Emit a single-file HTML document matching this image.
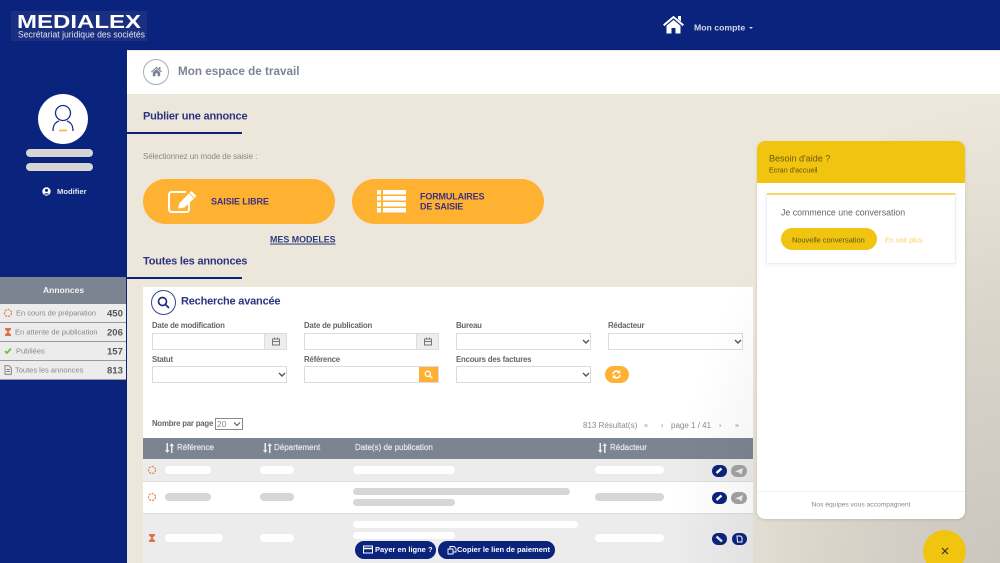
<!DOCTYPE html>
<html lang="fr"><head><meta charset="utf-8"><title>Medialex</title>
<style>
*{box-sizing:border-box}
html,body{margin:0;padding:0;width:1000px;height:563px;overflow:hidden;background:#ede7db;font-family:"Liberation Sans",sans-serif}
#page{position:relative;width:1000px;height:563px;overflow:hidden;background:#ede7db}
.a{position:absolute}
.t{position:absolute;white-space:nowrap;line-height:1;transform:translateY(-50%)}
.h2{font-size:11px;font-weight:700;color:#2a3380;letter-spacing:-.2px}
.lb{font-size:7.8px;font-weight:700;color:#666;letter-spacing:-.2px}
.p{position:absolute;border-radius:5px}
.w{background:#fff}.g{background:#d6d6d6}
input,select{position:absolute;margin:0;padding:0;background:#fff;border:1px solid #dcdcdc;border-radius:0;appearance:none;-webkit-appearance:none;height:17px}
.ad{position:absolute;height:17px;width:22px;background:#eee;border:1px solid #dcdcdc;border-left:0}
.row{position:absolute;left:0;width:126px;height:18px;background:#ececec;font-size:7.500px;color:#888}
.row b{position:absolute;left:107px;top:10px;transform:translateY(-50%);font-size:9.500px;color:#555;line-height:1}
.row span{position:absolute;top:50%;transform:translateY(-50%);line-height:1;white-space:nowrap}
.row svg{position:absolute;left:3px;top:4px}
.th{position:absolute;top:448px;transform:translateY(-50%);font-size:8px;color:#e6e8ee;-webkit-text-stroke:.2px #e6e8ee;line-height:1;white-space:nowrap}
.pay{position:absolute;top:541px;height:18px;border-radius:9px;background:#0a237d;color:#fff;font-size:7.500px;font-weight:700;line-height:18px;white-space:nowrap}
</style></head><body><div id="page">

<!-- header + sidebar -->
<div class="a" style="left:0;top:0;width:1000px;height:50px;background:#0a237d"></div>
<div class="a" style="left:0;top:50px;width:127px;height:513px;background:#0a237d"></div>
<div class="a" style="left:11px;top:11px;width:136px;height:30px;background:#1a2f80"></div>
<svg class="a" style="left:11px;top:11px" width="136" height="30">
<text x="6" y="17" font-family="Liberation Sans" font-weight="700" font-size="18" fill="#fff" textLength="124" lengthAdjust="spacingAndGlyphs">MEDIALEX</text>
<text x="7" y="26.500" font-family="Liberation Sans" font-size="9" fill="#dfe3f0" textLength="127" lengthAdjust="spacingAndGlyphs">Secrétariat juridique des sociétés</text>
</svg>
<svg class="a" style="left:663px;top:15px" width="21" height="19" viewBox="0 0 21 19"><path d="M.7 10.300 10.500 2l9.800 8.300" fill="none" stroke="#fff" stroke-width="2"/><path d="M15 1h3v5.500l-3-2.500zM3.500 10.800 10.500 4.900l7 5.900V18.500h-5v-5.500h-4v5.500h-5z" fill="#fff"/></svg>
<div class="t" style="left:694px;top:28px;font-size:8.700px;font-weight:700;color:#d5d9ea">Mon compte</div>
<div class="a" style="left:749px;top:27px;border:2.500px solid transparent;border-top:2.500px solid #d5d9ea;border-bottom:0"></div>

<!-- top band -->
<div class="a" style="left:127px;top:51px;width:873px;height:43px;background:#fff"></div>
<div class="a" style="left:143px;top:59px;width:26px;height:26px;border-radius:50%;border:1px solid #a8acb4;background:#fff"></div>
<svg class="a" style="left:151px;top:66px" width="11" height="11" viewBox="0 0 21 19"><path d="M.7 10.300 10.500 2l9.800 8.300" fill="none" stroke="#7d8491" stroke-width="2"/><path d="M15 1h3v5.500l-3-2.500zM3.500 10.800 10.500 4.900l7 5.900V18.500h-5v-5.500h-4v5.500h-5z" fill="#7d8491"/></svg>
<div class="t" style="left:178px;top:72px;font-size:11.700px;font-weight:700;color:#7d8491">Mon espace de travail</div>

<!-- user -->
<div class="a" style="left:38px;top:94px;width:50px;height:50px;border-radius:50%;background:#fff"></div>
<svg class="a" style="left:50px;top:104px" width="26" height="28" viewBox="0 0 26 28" fill="none" stroke="#1c2f85" stroke-width="1.300"><circle cx="13" cy="9" r="7.500"/><path d="M3 27c0-7 3-9 6-10M23 27c0-7-3-9-6-10"/><path d="M9 26.500h8" stroke="#ffb131" stroke-width="1.600"/></svg>
<div class="p" style="left:26px;top:149px;width:67px;height:8px;background:#d6d6d6;border-radius:4px"></div>
<div class="p" style="left:26px;top:163px;width:67px;height:8px;background:#d6d6d6;border-radius:4px"></div>
<svg class="a" style="left:42px;top:187px" width="9" height="9" viewBox="0 0 9 9"><circle cx="4.500" cy="4.500" r="4.200" fill="#fff"/><circle cx="4.500" cy="3.400" r="1.500" fill="#0a237d"/><path d="M1.800 7.500c.6-1.700 4.800-1.700 5.400 0" fill="#0a237d"/></svg>
<div class="t" style="left:57px;top:191.500px;font-size:7.600px;font-weight:700;color:#e6e8f2">Modifier</div>

<!-- annonces -->
<div class="a" style="left:0;top:277px;width:126px;height:27px;background:#7d8491"></div>
<div class="t" style="left:43px;top:290px;font-size:8.500px;font-weight:700;color:#f2f2f2">Annonces</div>
<div class="a" style="left:0;top:304px;width:126px;height:76px;background:#999"></div>
<div class="row" style="top:304px"><svg width="10" height="10"><circle cx="5" cy="5" r="3.500" fill="none" stroke="#e28050" stroke-width="1.300" stroke-dasharray="2 1.200"/></svg><span style="left:16px">En cours de préparation</span><b>450</b></div>
<div class="row" style="top:323px"><svg width="10" height="10" viewBox="0 0 10 10"><path d="M2 1h6v1.500L5.500 5 8 7.500V9H2V7.500L4.500 5 2 2.500z" fill="#d9744a"/></svg><span style="left:15px">En attente de publication</span><b>206</b></div>
<div class="row" style="top:342px"><svg width="10" height="10" viewBox="0 0 10 10"><path d="M2 5l2 2 4-4.500" fill="none" stroke="#62c23c" stroke-width="1.700"/></svg><span style="left:16px">Publiées</span><b>157</b></div>
<div class="row" style="top:361px"><svg width="10" height="10" viewBox="0 0 10 10"><path d="M2 .7h4L8.300 3v6.300H2zM3.500 4.500h3.300M3.500 6.500h3.300" fill="none" stroke="#777" stroke-width=".9"/></svg><span style="left:15px">Toutes les annonces</span><b>813</b></div>

<!-- main -->
<div class="t h2" style="left:143px;top:117px">Publier une annonce</div>
<div class="a" style="left:127px;top:132px;width:115px;height:2px;background:#0a237d"></div>
<div class="t" style="left:143px;top:156.500px;font-size:8px;letter-spacing:-.1px;color:#8b8784">Sélectionnez un mode de saisie :</div>

<div class="a" style="left:143px;top:179px;width:192px;height:45px;border-radius:22.500px;background:#ffb131"></div>
<svg class="a" style="left:167px;top:189px" width="32" height="26" viewBox="0 0 32 26" fill="none"><path d="M19 3H4.500A2.500 2.500 0 0 0 2 5.500v15A2.500 2.500 0 0 0 4.500 23h15a2.500 2.500 0 0 0 2.500-2.500V14" stroke="#fff" stroke-width="2"/><path d="M11 19.500 12.500 14 24.500 2l5 5L17.500 18.500z" fill="#fff"/><path d="M22.500 4.500l4.500 4.500" stroke="#ffb131" stroke-width=".8"/></svg>
<div class="t" style="left:211px;top:201.500px;font-size:9px;letter-spacing:-.1px;font-weight:700;color:#3d3180">SAISIE LIBRE</div>
<div class="a" style="left:352px;top:179px;width:192px;height:45px;border-radius:22.500px;background:#ffb131"></div>
<svg class="a" style="left:376px;top:189px" width="30" height="25" fill="#fff"><path d="M1 1h4v4.500H1zM7 1h23v4.500H7zM1 7h4v4.500H1zM7 7h23v4.500H7zM1 13h4v4.500H1zM7 13h23v4.500H7zM1 19h4v4.500H1zM7 19h23v4.500H7z"/></svg>
<div class="t" style="left:420px;top:197px;font-size:9px;letter-spacing:-.15px;font-weight:700;color:#3d3180">FORMULAIRES</div>
<div class="t" style="left:420px;top:207px;font-size:9px;letter-spacing:-.15px;font-weight:700;color:#3d3180">DE SAISIE</div>
<div class="t" style="left:270px;top:240px;font-size:8.900px;font-weight:700;color:#2f3a80;text-decoration:underline">MES MODELES</div>

<div class="t h2" style="left:143px;top:262px">Toutes les annonces</div>
<div class="a" style="left:127px;top:277px;width:115px;height:2px;background:#0a237d"></div>

<!-- card -->
<div class="a" style="left:143px;top:287px;width:610px;height:276px;background:#fff"></div>
<div class="a" style="left:151px;top:290px;width:25px;height:25px;border-radius:50%;border:1px solid #3a4590"></div>
<svg class="a" style="left:157px;top:296px" width="13" height="13" viewBox="0 0 13 13" fill="none" stroke="#1f2d80" stroke-width="1.700"><circle cx="5.500" cy="5.500" r="4"/><path d="M8.500 8.500 12 12"/></svg>
<div class="t h2" style="left:181px;top:302px">Recherche avancée</div>

<div class="t lb" style="left:152px;top:326px">Date de modification</div>
<div class="t lb" style="left:304px;top:326px">Date de publication</div>
<div class="t lb" style="left:456px;top:326px">Bureau</div>
<div class="t lb" style="left:608px;top:326px">Rédacteur</div>
<input style="left:152px;top:333px;width:113px"><div class="ad" style="left:265px;top:333px"></div>
<input style="left:304px;top:333px;width:113px"><div class="ad" style="left:417px;top:333px"></div>
<svg class="a" style="left:271px;top:337px" width="10" height="9" fill="none" stroke="#777"><path d="M1.500 2h7v6h-7zM1.500 4.500h7M3.500 .5v2M6.500 .5v2"/></svg>
<svg class="a" style="left:423px;top:337px" width="10" height="9" fill="none" stroke="#777"><path d="M1.500 2h7v6h-7zM1.500 4.500h7M3.500 .5v2M6.500 .5v2"/></svg>
<select style="left:456px;top:333px;width:135px"></select>
<select style="left:608px;top:333px;width:135px"></select>

<div class="t lb" style="left:152px;top:359.500px">Statut</div>
<div class="t lb" style="left:304px;top:359.500px">Référence</div>
<div class="t lb" style="left:456px;top:359.500px">Encours des factures</div>
<select style="left:152px;top:366px;width:135px"></select>
<input style="left:304px;top:366px;width:135px">
<div class="a" style="left:419px;top:367px;width:19px;height:15px;background:#ffb131"></div>
<svg class="a" style="left:424px;top:370px" width="9" height="9" viewBox="0 0 13 13" fill="none" stroke="#fff" stroke-width="2"><circle cx="5.500" cy="5.500" r="3.800"/><path d="M8.500 8.500 12 12"/></svg>
<select style="left:456px;top:366px;width:135px"></select>
<div class="a" style="left:605px;top:366px;width:24px;height:17px;border-radius:9px;background:#ffb131"></div>
<svg class="a" style="left:612px;top:370px" width="9" height="9" viewBox="0 0 9 9" fill="none" stroke="#fff" stroke-width="1.500"><path d="M1 4a3.500 3.500 0 0 1 6-1.800M8 5a3.500 3.500 0 0 1-6 1.800"/><path d="M7.800 .5v2.500H5.300M1.200 8.500V6h2.500" stroke-width="1"/></svg>
<svg class="a" style="left:582px;top:339px" width="8" height="6" fill="none" stroke="#555" stroke-width="1.400"><path d="M1 1l3 3 3-3"/></svg>
<svg class="a" style="left:734px;top:339px" width="8" height="6" fill="none" stroke="#555" stroke-width="1.400"><path d="M1 1l3 3 3-3"/></svg>
<svg class="a" style="left:278px;top:372px" width="8" height="6" fill="none" stroke="#555" stroke-width="1.400"><path d="M1 1l3 3 3-3"/></svg>
<svg class="a" style="left:582px;top:372px" width="8" height="6" fill="none" stroke="#555" stroke-width="1.400"><path d="M1 1l3 3 3-3"/></svg>

<div class="t lb" style="left:152px;top:424px">Nombre par page</div>
<div class="a" style="left:215px;top:418px;width:28px;height:12px;border:1px solid #888;font-size:8.500px;line-height:10px;color:#888;padding-left:1px">20</div>
<svg class="a" style="left:233px;top:422px" width="8" height="5" fill="none" stroke="#555" stroke-width="1.100"><path d="M1 .5l3 3 3-3"/></svg>
<div class="t" style="left:583px;top:425.500px;font-size:8px;color:#8a8a8a">813 Résultat(s)</div>
<div class="t" style="left:644px;top:425.500px;font-size:7px;color:#8a8a8a">«</div>
<div class="t" style="left:661px;top:425.500px;font-size:7px;color:#8a8a8a">‹</div>
<div class="t" style="left:671px;top:425.500px;font-size:8px;color:#8a8a8a">page 1 / 41</div>
<div class="t" style="left:719px;top:425.500px;font-size:7px;color:#8a8a8a">›</div>
<div class="t" style="left:735px;top:425.500px;font-size:7px;color:#8a8a8a">»</div>

<!-- table -->
<div class="a" style="left:143px;top:438px;width:610px;height:21px;background:#7d8491"></div>
<svg class="a" style="left:165px;top:443px" width="9" height="10" fill="#eee"><path d="M1.500 0h1.500v7h1.500L2.250 10 0 7h1.500zM6 3H4.500L6.750 0 9 3H7.500v7H6z"/></svg>
<svg class="a" style="left:263px;top:443px" width="9" height="10" fill="#eee"><path d="M1.500 0h1.500v7h1.500L2.250 10 0 7h1.500zM6 3H4.500L6.750 0 9 3H7.500v7H6z"/></svg>
<svg class="a" style="left:598px;top:443px" width="9" height="10" fill="#eee"><path d="M1.500 0h1.500v7h1.500L2.250 10 0 7h1.500zM6 3H4.500L6.750 0 9 3H7.500v7H6z"/></svg>
<div class="th" style="left:177px">Référence</div>
<div class="th" style="left:274px">Département</div>
<div class="th" style="left:355px">Date(s) de publication</div>
<div class="th" style="left:610px">Rédacteur</div>

<div class="a" style="left:143px;top:459px;width:610px;height:22px;background:#ececec"></div>
<div class="a" style="left:143px;top:481px;width:610px;height:1px;background:#ddd"></div>
<div class="a" style="left:143px;top:513px;width:610px;height:50px;background:#ececec;border-top:1px solid #ddd"></div>

<svg class="a" style="left:147px;top:465px" width="10" height="10"><circle cx="5" cy="5" r="3.500" fill="none" stroke="#e28050" stroke-width="1.200" stroke-dasharray="2 1.200"/></svg>
<svg class="a" style="left:147px;top:492px" width="10" height="10"><circle cx="5" cy="5" r="3.500" fill="none" stroke="#e28050" stroke-width="1.200" stroke-dasharray="2 1.200"/></svg>
<svg class="a" style="left:147px;top:533px" width="10" height="10" viewBox="0 0 10 10"><path d="M2 1h6v1.500L5.500 5 8 7.500V9H2V7.500L4.500 5 2 2.500z" fill="#d9744a"/></svg>

<div class="p w" style="left:165px;top:466px;width:46px;height:8px"></div>
<div class="p w" style="left:260px;top:466px;width:34px;height:8px"></div>
<div class="p w" style="left:353px;top:466px;width:102px;height:8px"></div>
<div class="p w" style="left:595px;top:466px;width:69px;height:8px"></div>

<div class="p g" style="left:165px;top:493px;width:46px;height:8px"></div>
<div class="p g" style="left:260px;top:493px;width:34px;height:8px"></div>
<div class="p g" style="left:353px;top:488px;width:217px;height:7px"></div>
<div class="p g" style="left:353px;top:499px;width:102px;height:7px"></div>
<div class="p g" style="left:595px;top:493px;width:69px;height:8px"></div>

<div class="p w" style="left:165px;top:534px;width:58px;height:8px"></div>
<div class="p w" style="left:260px;top:534px;width:34px;height:8px"></div>
<div class="p w" style="left:353px;top:521px;width:225px;height:7px"></div>
<div class="p w" style="left:353px;top:532px;width:102px;height:7px"></div>
<div class="p w" style="left:595px;top:534px;width:69px;height:8px"></div>

<svg class="a" style="left:712px;top:465px" width="36" height="12"><rect width="15" height="12" rx="6" fill="#0a237d"/><path d="M4.500 8 9.500 3.500" stroke="#fff" stroke-width="2.400"/><rect x="19" width="16" height="12" rx="6" fill="#a3a3a3"/><path d="M23 6.500 31 3l-1.500 6.500-2.500-2z" fill="#eee"/></svg>
<svg class="a" style="left:712px;top:492px" width="36" height="12"><rect width="15" height="12" rx="6" fill="#0a237d"/><path d="M4.500 8 9.500 3.500" stroke="#fff" stroke-width="2.400"/><rect x="19" width="16" height="12" rx="6" fill="#a3a3a3"/><path d="M23 6.500 31 3l-1.500 6.500-2.500-2z" fill="#eee"/></svg>
<svg class="a" style="left:712px;top:533px" width="36" height="12"><rect width="15" height="12" rx="6" fill="#0a237d"/><path d="M4.500 3.500 10 8.500" stroke="#e8e8f0" stroke-width="2.400"/><rect x="20" width="15" height="12" rx="6" fill="#0a237d"/><path d="M25 3h3.500l1.500 1.500V9h-4.500z" fill="none" stroke="#fff" stroke-width="1"/></svg>

<div class="pay" style="left:355px;width:81px;padding-left:20px">Payer en ligne ?</div>
<svg class="a" style="left:363px;top:545px" width="10" height="9" fill="none" stroke="#fff"><rect x=".5" y="1" width="9" height="7"/><path d="M.5 3.500h9" stroke-width="1.500"/></svg>
<div class="pay" style="left:438px;width:117px;padding-left:19px">Copier le lien de paiement</div>
<svg class="a" style="left:447px;top:545px" width="10" height="10" fill="none" stroke="#fff" stroke-width=".9"><path d="M1 4h5v5H1zM3 4V1.500h4L9 3.500V7H6"/></svg>

<!-- widget shadow -->
<div class="a" style="left:600px;top:0;width:400px;height:563px;pointer-events:none;background:radial-gradient(ellipse 330px 460px at 100% 100%,rgba(30,35,45,.17),rgba(30,35,45,.09) 55%,rgba(30,35,45,0) 100%)"></div>

<!-- chat widget -->
<div class="a" style="left:757px;top:141px;width:208px;height:378px;border-radius:8px;background:#fff;overflow:hidden;box-shadow:0 1px 3px rgba(0,0,0,.12)">
 <div class="a" style="left:0;top:0;width:208px;height:42px;background:#f1c40f"></div>
</div>
<div class="t" style="left:769px;top:159px;font-size:9px;color:#6a5a10">Besoin d'aide ?</div>
<div class="t" style="left:769px;top:169.500px;font-size:7.200px;color:#5d5210">Ecran d'accueil</div>
<div class="a" style="left:766px;top:193px;width:190px;height:71px;background:#fff;border:1px solid #e8eef6;border-top:2px solid #f9d56a;border-radius:2px;box-shadow:0 1px 5px rgba(120,150,200,.12)"></div>
<div class="t" style="left:781px;top:213px;font-size:8.800px;color:#666">Je commence une conversation</div>
<div class="a" style="left:781px;top:228px;width:96px;height:22px;border-radius:11px;background:#f1c40f"></div>
<div class="t" style="left:792px;top:239.500px;font-size:7.400px;color:#5a5320">Nouvelle conversation</div>
<div class="t" style="left:885px;top:239.500px;font-size:7.200px;color:#f9cf5a">En voir plus</div>
<div class="a" style="left:757px;top:491px;width:208px;height:1px;background:#f2f2f2"></div>
<div class="t" style="left:757px;width:208px;text-align:center;top:506px;font-size:6.700px;color:#888">Nos équipes vous accompagnent</div>
<div class="a" style="left:923px;top:530px;width:43px;height:43px;border-radius:50%;background:#f1c40f"></div>
<svg class="a" style="left:941px;top:547px" width="8" height="8" fill="none" stroke="#333" stroke-width="1.200"><path d="M1 1l6 6M7 1L1 7"/></svg>

</div></body></html>
